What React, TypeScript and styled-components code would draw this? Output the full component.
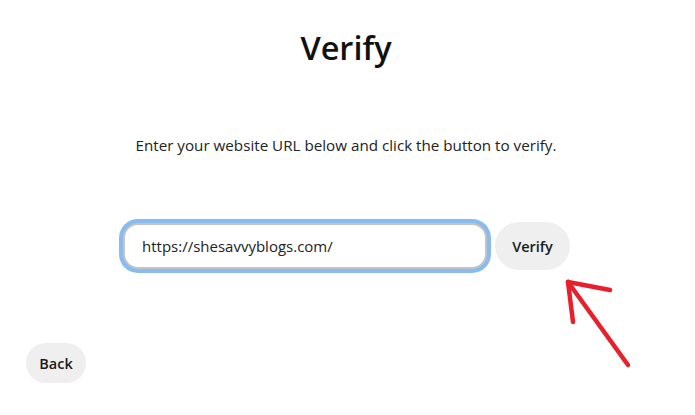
import React from "react";
import styled, { createGlobalStyle } from "styled-components";

const Global = createGlobalStyle`
  html, body { margin: 0; padding: 0; background: #ffffff; }
  body { font-family: "Open Sans", "Noto Sans", sans-serif; color: #111111; }
`;

const Page = styled.div`
  position: relative;
  width: 695px;
  height: 415px;
  display: flex;
  flex-direction: column;
  align-items: center;
  overflow: hidden;
`;

const Title = styled.h1`
  margin: 28px 3px 0 0;
  font-size: 32.5px;
  line-height: 40px;
  font-weight: 600;
  color: #111111;
`;

const Subtitle = styled.p`
  margin: 67px 3px 0 0;
  font-size: 15.2px;
  line-height: 20px;
  font-weight: 400;
  color: #222222;
`;

const Row = styled.div`
  margin: 64px 6px 0 0;
  display: flex;
  align-items: center;
  gap: 4px;
`;

const UrlInput = styled.input`
  box-sizing: border-box;
  margin: 4px;
  width: 364px;
  height: 46px;
  border: 2px solid #c4c4c4;
  border-radius: 15px;
  box-shadow: 0 0 0 4px #88bbf0;
  padding: 0 17px;
  font-family: "Open Sans", "Noto Sans", sans-serif;
  font-size: 15px;
  color: #222222;
  outline: none;
  background: #ffffff;
`;

const PillButton = styled.button<{ $w: number; $h: number }>`
  box-sizing: border-box;
  width: ${(p) => p.$w}px;
  height: ${(p) => p.$h}px;
  border: none;
  border-radius: 999px;
  background: #efefef;
  font-family: "Open Sans", "Noto Sans", sans-serif;
  font-size: 14.5px;
  font-weight: 600;
  color: #1a1a1a;
  padding: 0;
  cursor: pointer;
`;

const Footer = styled.div`
  align-self: stretch;
  margin-top: 70px;
  padding-left: 26px;
  display: flex;
`;

const Arrow = styled.svg`
  position: absolute;
  left: 0;
  top: 0;
  pointer-events: none;
`;

export default function App() {
  return (
    <Page>
      <Global />
      <Title>Verify</Title>
      <Subtitle>Enter your website URL below and click the button to verify.</Subtitle>
      <Row>
        <UrlInput defaultValue="https://shesavvyblogs.com/" />
        <PillButton $w={75} $h={48}>Verify</PillButton>
      </Row>
      <Footer>
        <PillButton $w={60} $h={40}>Back</PillButton>
      </Footer>
      <Arrow width="695" height="415" viewBox="0 0 695 415">
        <g stroke="#e8202b" strokeWidth="4.5" strokeLinecap="round" fill="none">
          <line x1="628" y1="365" x2="568" y2="282" />
          <line x1="568" y1="282" x2="610" y2="290" />
          <line x1="568" y1="282" x2="573" y2="322" />
        </g>
      </Arrow>
    </Page>
  );
}
